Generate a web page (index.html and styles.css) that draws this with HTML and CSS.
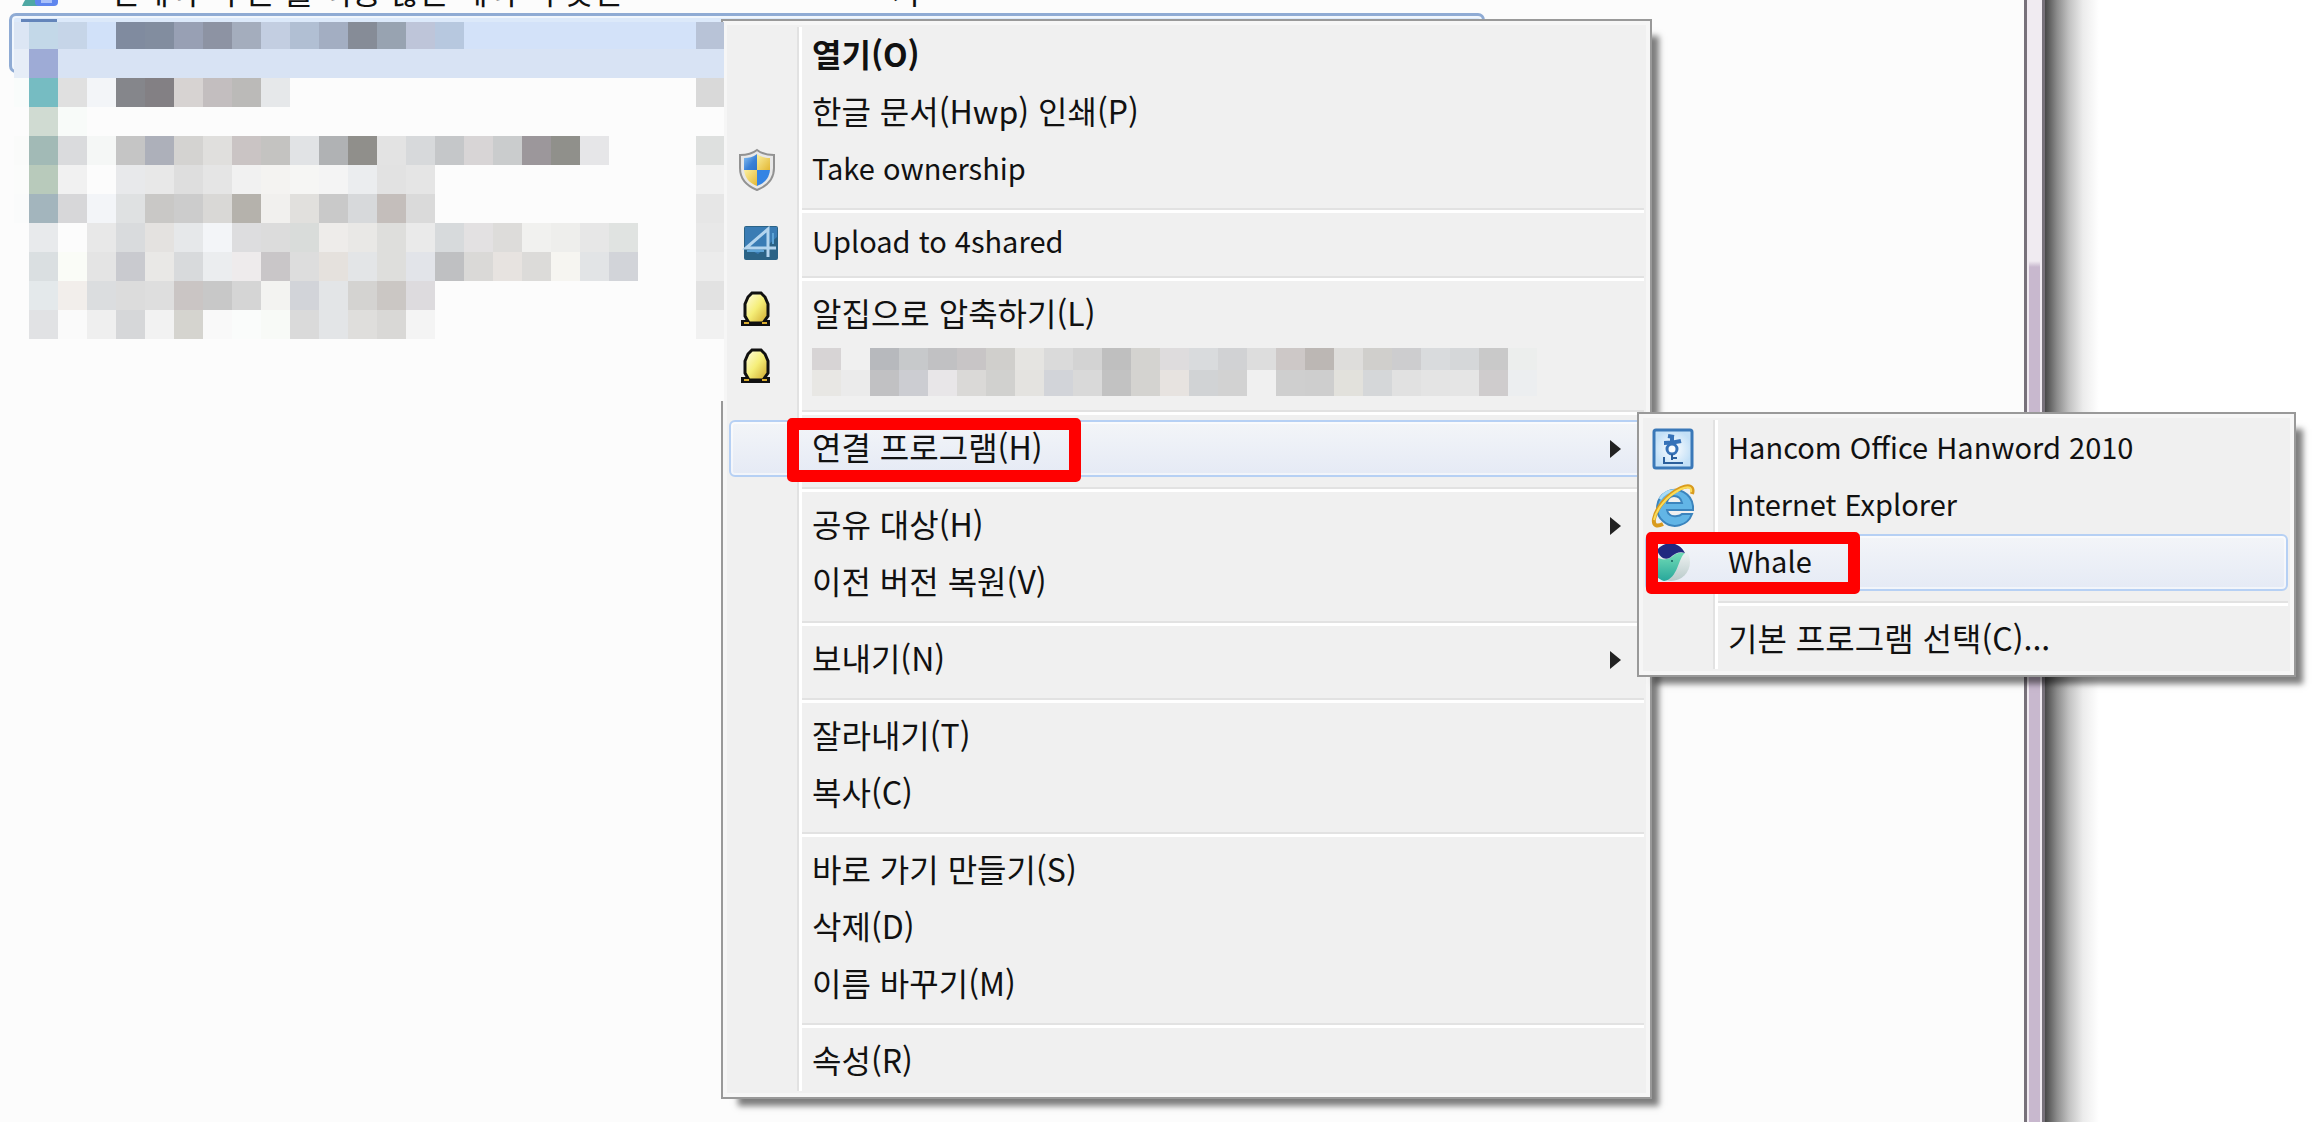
FILE: index.html
```
<!DOCTYPE html>
<html lang="ko">
<head>
    <meta charset="UTF-8">
    <meta name="viewport" content="width=device-width, initial-scale=1.0">
    <title>연결 프로그램</title>
    <link rel="stylesheet" href="styles.css">
</head>
<body>
    <div class="screen">
        <main class="explorer">
            <div class="file-row cut">
                <svg class="file-icon" viewBox="0 0 40 24" aria-hidden="true">
                    <path d="M2 24C6 14 12 10 22 8v16z" fill="#4fa8a4"/>
                    <rect x="15" y="4" width="23" height="20" rx="4" fill="#5f86ee"/>
                    <rect x="21" y="6" width="11" height="15" fill="#a9c0fa"/>
                </svg>
                <span class="file-name">컨테이 너 는 를 이용 않는 데이 터 못한</span>
                <span>가</span>
            </div>
            <div class="file-row selected"><span class="file-thumb"></span></div>
            <div class="mosaic" id="fileMosaic"></div>
        </main>
        <div class="rim"></div>
        <div class="desktop"></div>

        <!-- Context menu -->
        <ul class="menu context">
            <li><button class="default"><span class="icon"></span>열기(O)</button></li>
            <li><button><span class="icon"></span>한글 문서(Hwp) 인쇄(P)</button></li>
            <li><button class="latin"><span class="icon">
                <svg viewBox="0 0 42 42" aria-hidden="true">
                    <defs>
                        <linearGradient id="blue" x1="0" y1="0" x2="1" y2="1">
                            <stop offset="0" stop-color="#8cc4f4"/>
                            <stop offset="0.6" stop-color="#3a80d6"/>
                            <stop offset="1" stop-color="#2f74cc"/>
                        </linearGradient>
                        <linearGradient id="yellow" x1="0" y1="0" x2="1" y2="1">
                            <stop offset="0" stop-color="#fbf0a0"/>
                            <stop offset="1" stop-color="#e3b733"/>
                        </linearGradient>
                    </defs>
                    <path d="M21 1C16 5 10 6 4 6v13c0 11 7 18 17 22 10-4 17-11 17-22V6C32 6 26 5 21 1z" fill="#e8e8e8" stroke="#929292" stroke-width="2"/>
                    <path d="M21 5c-4 3-8 4-13 4v12h13z" fill="url(#blue)"/>
                    <path d="M21 5c4 3 8 4 13 4v12H21z" fill="url(#yellow)"/>
                    <path d="M21 21H8c1 8 5 13 13 16z" fill="url(#yellow)"/>
                    <path d="M21 21h13c-1 8-5 13-13 16z" fill="#3484e4"/>
                </svg>
            </span>Take ownership</button></li>
            <li class="line"></li>
            <li class="short"><button class="latin"><span class="icon">
                <svg viewBox="0 0 42 42" aria-hidden="true">
                    <rect x="8" y="5" width="34" height="34" rx="2" fill="#2b6386"/>
                    <path d="M9 6h32v10L22 33 9 26z" fill="#3a7cb4"/>
                    <path d="M32 36V8L10 27h30" fill="none" stroke="#b4d5ee" stroke-width="3"/>
                    <path d="M37 12v11M11 30h17" stroke="#5da4d6" stroke-width="2"/>
                </svg>
            </span>Upload to 4shared</button></li>
            <li class="line"></li>
            <li><button><span class="icon">
                <svg viewBox="0 0 42 42" aria-hidden="true">
                    <defs>
                        <linearGradient id="egg" x1="0" y1="0" x2="1" y2="1">
                            <stop offset="0" stop-color="#fffde8"/>
                            <stop offset="0.5" stop-color="#f5ee78"/>
                            <stop offset="1" stop-color="#cda428"/>
                        </linearGradient>
                    </defs>
                    <path d="M5 26h29v6H5z" fill="#111"/>
                    <path d="M16-1h9l4 4 3 7v12l-5 7H13l-4-7V10l3-7z" fill="url(#egg)" stroke="#111" stroke-width="3"/>
                    <path d="M8 29h5M26 29h5" stroke="#dcae30" stroke-width="2"/>
                </svg>
            </span>알집으로 압축하기(L)</button></li>
            <li><button aria-label="알집"><span class="icon">
                <svg viewBox="0 0 42 42" aria-hidden="true">
                    <path d="M5 26h29v6H5z" fill="#111"/>
                    <path d="M16-1h9l4 4 3 7v12l-5 7H13l-4-7V10l3-7z" fill="url(#egg)" stroke="#111" stroke-width="3"/>
                    <path d="M8 29h5M26 29h5" stroke="#dcae30" stroke-width="2"/>
                </svg>
            </span><span class="mosaic label" id="labelMosaic"></span></button></li>
            <li class="line"></li>
            <li class="open">
                <button class="active"><span class="icon"></span>연결 프로그램(H)<span class="arrow"></span></button>
                <span class="mark mark-program"></span>

                <!-- Submenu -->
                <ul class="menu sub">
                    <li><button class="latin"><span class="icon">
                        <svg viewBox="0 0 42 42" aria-hidden="true">
                            <defs>
                                <radialGradient id="page">
                                    <stop offset="0" stop-color="#ffffff"/>
                                    <stop offset="1" stop-color="#c3e0f7"/>
                                </radialGradient>
                            </defs>
                            <rect x="2" y="2" width="38" height="38" rx="2" fill="url(#page)" stroke="#3a78b8" stroke-width="3"/>
                            <path d="M16 8l6 1M12 15q9 0 17-2M20 9v5" fill="none" stroke="#3672b8" stroke-width="4"/>
                            <circle cx="20" cy="21" r="5" fill="none" stroke="#3672b8" stroke-width="3"/>
                            <path d="M20 26v6M12 29v6h19M20 30h5" fill="none" stroke="#2b5f9c" stroke-width="2"/>
                        </svg>
                    </span>Hancom Office Hanword 2010</button></li>
                    <li><button class="latin"><span class="icon">
                        <svg viewBox="0 0 42 42" aria-hidden="true">
                            <path d="M40 29A18 18 0 1 1 41 21v4H15c1 5 5 7 10 6 2 0 4-1 5-2zM15 18h15c-1-5-4-7-8-7s-7 3-7 7z" fill="#62b5e6" stroke="#3b84bd" stroke-width="2"/>
                            <path d="M8 14C13 6 20 5 26 6" fill="none" stroke="#a9dcf8" stroke-width="3"/>
                            <path d="M40 9C42 2 38-1 29 3 16 9 4 23 2 34c-1 7 3 8 9 5" fill="none" stroke="#d99b1e" stroke-width="4"/>
                            <path d="M39 7C40 2 36 1 29 4 16 10 4 24 2 35" fill="none" stroke="#fbdc58" stroke-width="2"/>
                        </svg>
                    </span>Internet Explorer</button></li>
                    <li>
                        <button class="latin active"><span class="icon">
                            <svg viewBox="0 0 42 42" aria-hidden="true">
                                <defs>
                                    <linearGradient id="sea" x1="0" y1="0" x2="0" y2="1">
                                        <stop offset="0" stop-color="#72dcb6"/>
                                        <stop offset="1" stop-color="#28a79b"/>
                                    </linearGradient>
                                    <linearGradient id="belly" x1="0" y1="0" x2="0" y2="1">
                                        <stop offset="0" stop-color="#ffffff"/>
                                        <stop offset="1" stop-color="#b9caca"/>
                                    </linearGradient>
                                </defs>
                                <circle cx="19" cy="20" r="19" fill="url(#belly)"/>
                                <path d="M2 12C8 20 17 18 22 13c4-3 8-2 11-2-7 5-7 26-21 28C0 35-3 22 2 12z" fill="url(#sea)"/>
                                <path d="M5 8C13-2 27-1 33 11c-5-2-9 0-13 3C15 19 8 17 5 8z" fill="#20297f"/>
                                <circle cx="20" cy="19" r="1" fill="#17625f"/>
                            </svg>
                        </span>Whale</button>
                        <span class="mark mark-whale"></span>
                    </li>
                    <li class="line"></li>
                    <li><button><span class="icon"></span>기본 프로그램 선택(C)...</button></li>
                </ul>
            </li>
            <li class="line"></li>
            <li><button><span class="icon"></span>공유 대상(H)<span class="arrow"></span></button></li>
            <li><button><span class="icon"></span>이전 버전 복원(V)</button></li>
            <li class="line"></li>
            <li><button><span class="icon"></span>보내기(N)<span class="arrow"></span></button></li>
            <li class="line"></li>
            <li><button><span class="icon"></span>잘라내기(T)</button></li>
            <li><button><span class="icon"></span>복사(C)</button></li>
            <li class="line"></li>
            <li><button><span class="icon"></span>바로 가기 만들기(S)</button></li>
            <li><button><span class="icon"></span>삭제(D)</button></li>
            <li><button><span class="icon"></span>이름 바꾸기(M)</button></li>
            <li class="line"></li>
            <li><button><span class="icon"></span>속성(R)</button></li>
        </ul>
    </div>

    <script src="mosaic.js"></script>
</body>
</html>
```
FILE: styles.css
```
body {
    margin: 0;
    background-color: #fff;
    color: #111;
    font-family: "Noto Sans CJK KR", sans-serif;
    font-size: 32px;
}
.screen {
    position: relative;
    display: flex;
    height: 100vh;
    overflow: hidden;
}

/* Explorer window */
.explorer {
    flex: 1;
    background-color: #fcfcfc;
}
.file-row {
    display: flex;
    box-sizing: border-box;
}
.file-row.cut {
    height: 13px;
    align-items: flex-end;
    gap: 50px;
    padding: 0 0 7px 20px;
    overflow: hidden;
    line-height: 32px;
    white-space: nowrap;
}
.file-icon {
    width: 40px;
    height: 24px;
    flex: none;
}
.file-name {
    width: 732px;
}
.file-row.selected {
    width: 1476px;
    height: 60px;
    margin-left: 9px;
    padding: 3px 9px;
    border: 3px solid #8fabd4;
    border-radius: 7px;
    background-color: #dce9fa;
    box-shadow: inset 0 0 0 2px #f0f6fd;
}
.file-thumb {
    width: 30px;
    height: 30px;
    border: 3px solid #6485ba;
}
.rim {
    width: 11px;
    border: solid #f0eaf1;
    border-width: 0 2px;
    outline: 3px solid #77717a;
    margin: -3px 3px;
    background: linear-gradient(#f0ebf1 264px, #c8b8ce 270px);
}
.desktop {
    width: 267px;
    background: linear-gradient(to right, #484848, #8c8c8c 12px, #c2c2c2 24px, #ececec 38px, #fff 54px);
}

/* Pixelated areas */
.mosaic {
    display: grid;
    grid-template-columns: 15px repeat(23, 29px) 28px;
    grid-template-rows: 27px;
    grid-auto-rows: 29px;
}
#fileMosaic {
    position: absolute;
    top: 22px;
    left: 14px;
    z-index: 2;
    height: 379px;
    width: 710px;
    background-color: #fcfcfc;
}
.mosaic.label {
    grid-template-columns: repeat(25, 29px);
    grid-template-rows: 22px 26px;
}

/* Menus */
.menu {
    position: absolute;
    z-index: 1;
    box-sizing: border-box;
    margin: 0;
    padding: 6px 6px 7px;
    list-style: none;
    border: 2px solid #999;
    background: linear-gradient(to right, #e2e2e2 2px, #fff 2px) 74px 6px / 5px calc(100% - 12px) no-repeat #f0f0f0;
    box-shadow: inset 0 0 0 4px #f6f6f6, 12px 12px 6px -5px rgba(0, 0, 0, 0.5);
}
.menu.context {
    top: 19px;
    left: 721px;
    width: 931px;
}
.menu.sub {
    top: -8px;
    left: calc(100% - 7px);
    width: 659px;
}
.menu li {
    position: relative;
    height: 57px;
}
.menu li.short {
    height: 48px;
}
.menu li.line {
    height: 2px;
    margin: 10px 0 5px 73px;
    background-color: #e2e2e2;
    border-bottom: 3px solid #fff;
}
.menu button {
    display: flex;
    align-items: flex-start;
    box-sizing: border-box;
    width: 100%;
    height: 100%;
    padding: 0 21px 0 5px;
    border: 2px solid transparent;
    border-radius: 6px;
    background: none;
    color: inherit;
    font: inherit;
    line-height: 48px;
    text-align: left;
    white-space: nowrap;
}
.menu .short button {
    line-height: 40px;
}
.menu button.default {
    font-weight: bold;
}
.menu button.latin {
    font-size: 29px;
}
.menu button.active {
    border-color: #b6d0f4;
    background: linear-gradient(#f3f5f8, #e5eaf5);
    box-shadow: inset 0 0 0 2px rgba(255, 255, 255, 0.5);
}
.icon {
    flex: none;
    align-self: center;
    width: 42px;
    height: 42px;
    margin-right: 34px;
}
.icon svg {
    display: block;
    overflow: visible;
}
.mosaic.label {
    align-self: center;
}
.arrow {
    align-self: center;
    margin-left: auto;
    border: solid transparent;
    border-width: 9px 0 9px 11px;
    border-left-color: #222;
}

/* Red frames around the steps */
.mark {
    position: absolute;
    z-index: 3;
    box-sizing: border-box;
    border: 12px solid #f00;
    border-radius: 5px;
    pointer-events: none;
}
.mark-program {
    top: -2px;
    left: 58px;
    width: 294px;
    height: 64px;
}
.mark-whale {
    top: -2px;
    left: 1px;
    width: 214px;
    height: 62px;
}
```
FILE: mosaic.js
```
// '-' leaves a cell empty
const fileRows = [
    'dce6f4 c3d8e8 c6d5e8 d1e1f9 808b9f 828d9f 98a0b4 8d93a3 a4adbd c3cee1 b1bfd3 a3aec2 868c97 98a3b1 bec5d9 b7c8df d3e2f9 d3e2f9 d3e2f9 d3e2f9 d3e2f9 d3e2f9 d3e2f9 d3e2f9 b8c3d7',
    'e6edf7 9eabd6 d8e3f4 d8e3f4 d8e3f4 d8e3f4 d8e3f4 d8e3f4 d8e3f4 d8e3f4 d8e3f4 d8e3f4 d8e3f4 d8e3f4 d8e3f4 d8e3f4 d8e3f4 d8e3f4 d8e3f4 d8e3f4 d8e3f4 d8e3f4 d8e3f4 d8e3f4 d8e3f4',
    'f9fcfb 76bcc2 e0e0e0 f3f5f8 85868b 838084 d7d3d2 c3bebf bbbab8 e6e8ea - - - - - - - - - - - - - - d9d9d9',
    '- d0dbd2 f8fbf9 - - - - - - - - - - - - - - - - - - - - - -',
    'fafbfa a2bab6 dadbdd f5f7f6 c5c5c5 adb0ba d4d3d1 e0dfdd cac4c4 c4c3c1 e1e3e5 b0b2b4 908f8b e3e3e3 d7d9db c5c7c9 d8d5d6 cacccd 9c979b 90908b e6e6e8 - - - dee0df',
    'fbfcfb b8cabb f1f1f1 - e8e9eb e8e8e8 dedede e5e5e5 f1f1f1 f4f3f1 f6f6f4 f4f4f4 ebedef e2e2e2 e5e5e5 - - - - - - - - - f1f1f1',
    'fafbfb a3b5bd d7d7d9 f3f5f8 dfe1e2 c9c8c6 cccccc d9d8d6 b5b2ac f1f0ee e1e0dd c9c9c9 d7d9db c4bebb dadada - - - - - - - - - e6e6e6',
    '- e8eaec - e8e8e8 d9dbdd e4e2e0 e6e8ea f3f5f8 dddddf dcdcdc d9dcda eeecea e9e8e6 dededc eaeaea d7dadc e3e1e2 dddcda f1f1ef eeeeec e7e7e7 e0e3e1 - - e8e8e8',
    '- dadfe1 fafcf7 e4e4e4 c9cacf e9e8e6 d8dadc ebedef eeebec c9c6c8 dddddd e5e1dd e3e5e7 dededc e2e4e9 bfc0c2 dad9d7 e7e3e0 dcdbd9 f6f5f1 e2e4e6 d2d4d9 - - ececec',
    '- e4e9eb f2eeeb dbdddf dcdcdc dedede cac5c4 c8c8c8 d5d5d5 f3f3f1 d2d4d9 e3e5e7 d4d3d1 cbc7c4 dddbde - - - - - - - - - e2e2e2',
    '- e1e2e4 fafafa efefef d6d7d9 f2f2f2 d5d4cf f9f9f9 fafcfb f8faf7 dadada e3e5e7 dfdedc d9d8d6 f4f4f4 - - - - - - - - - f1f1f1'
];

const labelRows = [
    'd7d4d5 f0f0f0 b7b9bd c7c9cb c1c1c3 c8c5c6 d0cfcc e5e4e1 dadada d3d3d3 bfbfbf d4d3d0 dedcdd d9dbdd d1d2d4 dddddd cdc8c7 bcb7b4 dedddb d0cfcc cdcdcf d9dbdd d5d7d9 c9c9c9 eceeed',
    'e8e7e4 ebebeb c1c1c3 cccdd2 e8e6e8 dad9d7 d1d1cf e4e3e0 d2d4d9 d9d9d9 c2c2c2 d4d3d0 e7e3e0 d1d3d5 d2d2d2 f0f0f0 cfcfcf cecece e2e1dc d5d7d9 e1e1e1 e4e4e4 e5e5e5 cfcccd eceef0'
];

function drawMosaic(id, rows) {
    const mosaic = document.getElementById(id);
    rows.forEach(row => {
        row.split(' ').forEach(color => {
            const cell = document.createElement('span');
            if (color !== '-') {
                cell.style.backgroundColor = '#' + color;
            }
            mosaic.appendChild(cell);
        });
    });
}

drawMosaic('fileMosaic', fileRows);
drawMosaic('labelMosaic', labelRows);
```
